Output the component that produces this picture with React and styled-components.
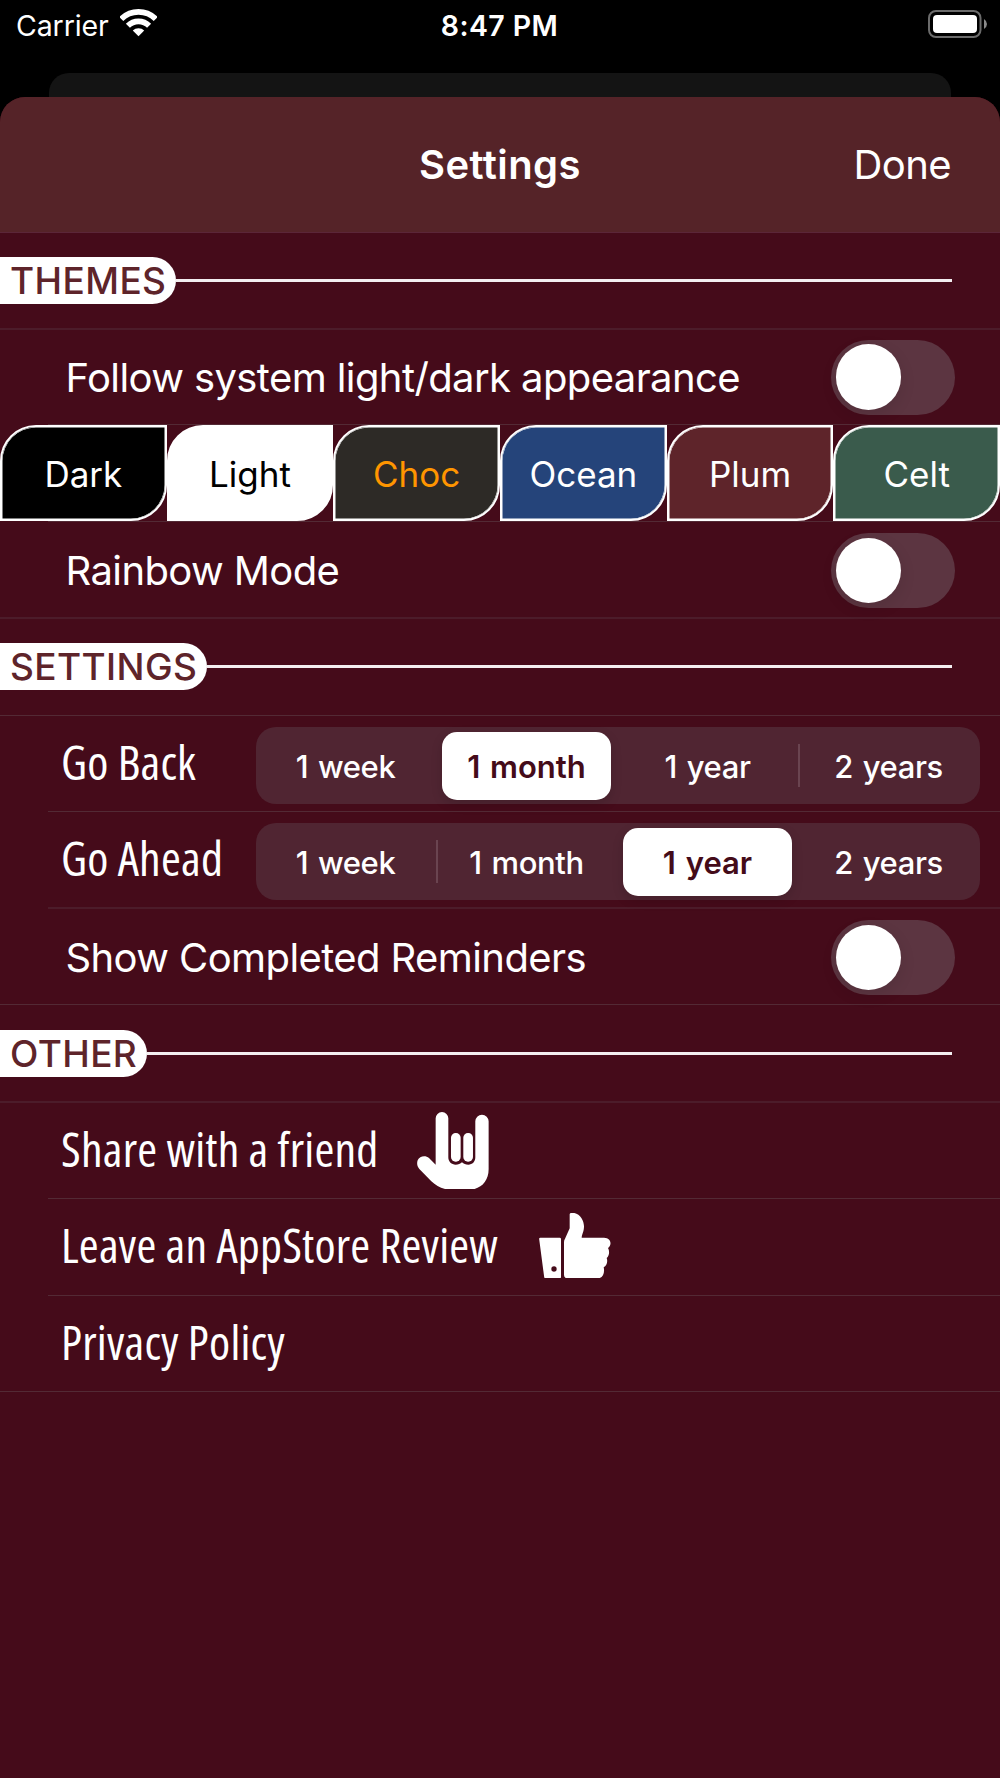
import React, { useState } from "react";
import styled, { createGlobalStyle } from "styled-components";

const themes = [
    { name: "Dark", bg: "#000000", color: "#ffffff" },
    { name: "Light", bg: "#ffffff", color: "#000000" },
    { name: "Choc", bg: "#2d2a26", color: "#ff9500" },
    { name: "Ocean", bg: "#25447a", color: "#ffffff" },
    { name: "Plum", bg: "#5e242a", color: "#ffffff" },
    { name: "Celt", bg: "#3a5b4c", color: "#ffffff" },
];

const ranges = ["1 week", "1 month", "1 year", "2 years"];

const WifiIcon = () => (
    <svg width="37" height="28" viewBox="0 0 110 83" fill="none" stroke="#fff" strokeWidth="17">
        <path d="M3.7 29.7A72.5 72.5 0 0 1 106.3 29.7" />
        <path d="M23.5 49.5A44.5 44.5 0 0 1 86.5 49.5" />
        <path d="M55 81L38 64A24 24 0 0 1 72 64Z" fill="#fff" stroke="none" />
    </svg>
);

const BatteryIcon = () => (
    <svg width="60" height="28" viewBox="0 0 60 28" fill="none">
        <rect x="1" y="1" width="51.5" height="26" rx="7" stroke="#6b6b6b" strokeWidth="2" />
        <rect x="5" y="5" width="44" height="18" rx="4" fill="#fff" />
        <path d="M56 9Q59 11 59 14T56 19Z" fill="#8a8a8a" />
    </svg>
);

const RockHandIcon = () => (
    <svg width="72.3" height="77.7" viewBox="45 50 217 233" fill="#fff">
        <path d="M101 208V69A19 19 0 0 1 139 69V186C139 200 149 208 161 208C169 208 175 206 180 201C185 206 191 208 199 208C211 208 220 200 220 186V78A20 20 0 0 1 260 78V222C260 258 236 283 202 283H148C122 283 104 273 88 258L52 221C45 213 44 203 47 195C53 181 71 179 81 188Z" />
        <rect x="147" y="113" width="29" height="86" rx="14" />
        <rect x="184" y="113" width="29" height="86" rx="14" />
    </svg>
);

const ThumbsUpIcon = () => (
    <svg width="71.7" height="65.7" viewBox="412 353 215 197" fill="#fff">
        <path
            fillRule="evenodd"
            d="M416 427H474Q478 427 478 431V545Q478 549 474 549H432Q428 549 427.500 545L412.500 431Q412 427 416 427ZM449 521A8 8 0 1 0 465 521A8 8 0 1 0 449 521Z"
        />
        <path d="M487 539V440Q487 434 490 430L504 399V357Q504 353 509 353H518C536 356 547 376 547 393C547 409 541 416 540 427H607C628 427 632 449 619 458C625 469 622 482 615 488C619 499 615 511 606 516C610 533 603 549 588 549H498Q487 549 487 539Z" />
    </svg>
);

const Switch = () => {
    const [on, setOn] = useState(false);
    return (
        <SwitchTrack type="button" role="switch" aria-checked={on} $on={on} onClick={() => setOn(!on)}>
            <SwitchKnob />
        </SwitchTrack>
    );
};

const SegmentedControl = ({ initial }) => {
    const [selected, setSelected] = useState(initial);
    return (
        <Segments>
            {ranges.map((range, i) => (
                <Segment
                    key={range}
                    type="button"
                    $divider={i > 0 && i !== selected && i - 1 !== selected}
                    onClick={() => setSelected(i)}
                >
                    <SegmentLabel $active={i === selected}>{range}</SegmentLabel>
                </Segment>
            ))}
        </Segments>
    );
};

const Section = ({ title, height = 96, top = 24 }) => (
    <SectionRow $height={height} $top={top}>
        <SectionPill>{title}</SectionPill>
        <SectionRule />
    </SectionRow>
);

const App = () => {
    return (
        <>
            <GlobalStyle />
            <Screen>
                <StatusBar>
                    <Carrier>
                        Carrier
                        <WifiIcon />
                    </Carrier>
                    <Clock>8:47 PM</Clock>
                    <Battery>
                        <BatteryIcon />
                    </Battery>
                </StatusBar>
                <BackCard />
                <Sheet>
                    <Header>
                        <Title>Settings</Title>
                        <DoneButton type="button">Done</DoneButton>
                    </Header>

                    <Section title="THEMES" height={95} />
                    <Separator $soft />
                    <Row $height={94}>
                        <RowLabel>Follow system light/dark appearance</RowLabel>
                        <Switch />
                    </Row>
                    <Separator $inset />
                    <ThemeRow>
                        {themes.map((theme) => (
                            <ThemeChip key={theme.name} type="button" $bg={theme.bg} $color={theme.color}>
                                {theme.name}
                            </ThemeChip>
                        ))}
                    </ThemeRow>
                    <Separator $inset />
                    <Row $height={95} $top={2}>
                        <RowLabel>Rainbow Mode</RowLabel>
                        <Switch />
                    </Row>
                    <Separator $soft />

                    <Section title="SETTINGS" />
                    <Separator />
                    <Row $height={95} $end={20}>
                        <NarrowLabel>Go Back</NarrowLabel>
                        <SegmentedControl initial={1} />
                    </Row>
                    <Separator $inset />
                    <Row $height={95} $end={20}>
                        <NarrowLabel>Go Ahead</NarrowLabel>
                        <SegmentedControl initial={2} />
                    </Row>
                    <Separator $inset $soft />
                    <Row $height={95} $top={2}>
                        <RowLabel>Show Completed Reminders</RowLabel>
                        <Switch />
                    </Row>
                    <Separator />

                    <Section title="OTHER" top={25} />
                    <Separator $soft />
                    <Row $height={95}>
                        <NarrowLabel>Share with a friend</NarrowLabel>
                        <IconSlot $left={38}>
                            <RockHandIcon />
                        </IconSlot>
                    </Row>
                    <Separator $inset />
                    <Row $height={96}>
                        <NarrowLabel>Leave an AppStore Review</NarrowLabel>
                        <IconSlot $left={41} $bottom={3}>
                            <ThumbsUpIcon />
                        </IconSlot>
                    </Row>
                    <Separator $inset />
                    <Row $height={95}>
                        <NarrowLabel>Privacy Policy</NarrowLabel>
                    </Row>
                    <Separator />
                </Sheet>
            </Screen>
        </>
    );
};

const GlobalStyle = createGlobalStyle`
    * {
        box-sizing: border-box;
    }

    body {
        margin: 0;
        background: #000;
    }

    button {
        margin: 0;
        padding: 0;
        border: none;
        background: none;
        color: inherit;
        font: inherit;
        letter-spacing: inherit;
        cursor: pointer;
    }

    svg {
        display: block;
        flex-shrink: 0;
    }
`;

const Screen = styled.div`
    display: flex;
    flex-direction: column;
    width: 1000px;
    height: 1778px;
    overflow: hidden;
    background: #000;
    color: #fff;
    font-family: Inter, "Liberation Sans", sans-serif;
`;

const StatusBar = styled.div`
    display: grid;
    grid-template-columns: 1fr auto 1fr;
    align-items: center;
    height: 73px;
    padding: 0 12px 23px 16px;
    font-size: 28.500px;
`;

const Carrier = styled.div`
    display: flex;
    align-items: center;
    gap: 11px;
    letter-spacing: -0.1px;

    svg {
        margin-top: -4px;
    }
`;

const Clock = styled.div`
    margin-left: -5px;
    font-weight: 560;
    letter-spacing: 0.4px;
`;

const Battery = styled.div`
    display: flex;
    justify-content: flex-end;
    margin-top: -2px;
`;

const BackCard = styled.div`
    flex-shrink: 0;
    height: 24px;
    margin: 0 49px;
    border-radius: 20px 20px 0 0;
    background: #141414;
`;

const Sheet = styled.main`
    flex: 1;
    overflow: hidden;
    border-radius: 25px 25px 0 0;
    background: #450b1a;
`;

const Header = styled.header`
    display: grid;
    grid-template-columns: 1fr auto 1fr;
    align-items: center;
    height: 136px;
    padding: 0 49px;
    border-bottom: 1px solid #5b2638;
    background: #552328;
    font-size: 40px;
`;

const Title = styled.h1`
    grid-column: 2;
    margin: 0;
    font-size: 40px;
    font-weight: 590;
    letter-spacing: 0.4px;
`;

const DoneButton = styled.button`
    justify-self: end;
    letter-spacing: -0.6px;
`;

const Separator = styled.div`
    height: ${({ $soft }) => ($soft ? "2px" : "1px")};
    margin-left: ${({ $inset }) => ($inset ? "48px" : "0")};
    background: ${({ $soft }) => ($soft ? "#4c1c2a" : "#532a35")};
`;

const SectionRow = styled.div`
    display: flex;
    align-items: flex-start;
    height: ${({ $height }) => $height}px;
    padding: ${({ $top }) => $top}px 48px 0 0;
`;

const SectionPill = styled.h2`
    margin: 0;
    padding: 0 10px;
    border-radius: 0 24px 24px 0;
    background: #fff;
    color: #5e242a;
    font-size: 37px;
    font-weight: 480;
    line-height: 47px;
    letter-spacing: 0.4px;
`;

const SectionRule = styled.div`
    flex: 1;
    height: 3px;
    margin-top: 22px;
    background: #f3eef0;
`;

const Row = styled.div`
    display: flex;
    align-items: center;
    height: ${({ $height }) => $height}px;
    padding-top: ${({ $top = 0 }) => $top}px;
    padding-right: ${({ $end = 45 }) => $end}px;
`;

const RowLabel = styled.span`
    flex: 1;
    padding-left: 65.500px;
    font-size: 40px;
    letter-spacing: -0.6px;
`;

const NarrowLabel = styled.span`
    padding: 0 0 5px 61px;
    font-family: "Open Sans", "Liberation Sans", sans-serif;
    font-size: 48px;
    font-stretch: 75%;
    font-weight: 385;
    letter-spacing: 0.2px;
    white-space: nowrap;
`;

const IconSlot = styled.span`
    margin: 0 0 ${({ $bottom = 0 }) => $bottom}px ${({ $left }) => $left}px;
`;

const SwitchTrack = styled.button`
    width: 124px;
    height: 75px;
    padding-left: 4.500px;
    border-radius: 38px;
    background: ${({ $on }) => ($on ? "#34c759" : "#5c3541")};

    span {
        transform: translateX(${({ $on }) => ($on ? 49 : 0)}px);
    }
`;

const SwitchKnob = styled.span`
    display: block;
    width: 65.500px;
    height: 65.500px;
    border-radius: 50%;
    background: #fff;
    box-shadow: 0 5px 16px rgba(0, 0, 0, 0.1);
`;

const ThemeRow = styled.div`
    display: grid;
    grid-template-columns: repeat(6, 1fr);
    height: 96px;
`;

const ThemeChip = styled.button`
    padding-top: 1px;
    border: 2px solid #fff;
    border-radius: 36px 0 36px 0;
    background: ${({ $bg }) => $bg};
    box-shadow: inset 0 0 0 0.5px #fff;
    color: ${({ $color }) => $color};
    font-size: 35px;
`;

const Segments = styled.div`
    display: grid;
    grid-template-columns: repeat(4, 1fr);
    width: 724px;
    height: 77px;
    margin: 4px 0 0 auto;
    border-radius: 20px;
    background: #502532;
    font-size: 31px;
`;

const Segment = styled.button`
    display: flex;
    align-items: center;

    &::before {
        content: "";
        width: 2px;
        height: 43px;
        margin: 0 -1px;
        background: ${({ $divider }) => ($divider ? "#6a4450" : "transparent")};
    }
`;

const SegmentLabel = styled.span`
    flex: 1;
    height: 68px;
    margin: 0 7px 0 5px;
    border-radius: 15px;
    background: ${({ $active }) => ($active ? "#fff" : "transparent")};
    box-shadow: ${({ $active }) => ($active ? "0 4px 12px rgba(0, 0, 0, 0.14)" : "none")};
    color: ${({ $active }) => ($active ? "#440b19" : "#fff")};
    font-weight: ${({ $active }) => ($active ? 560 : 450)};
    line-height: 69px;
    letter-spacing: ${({ $active }) => ($active ? 0 : -0.4)}px;
    word-spacing: 2px;
`;

export default App;
